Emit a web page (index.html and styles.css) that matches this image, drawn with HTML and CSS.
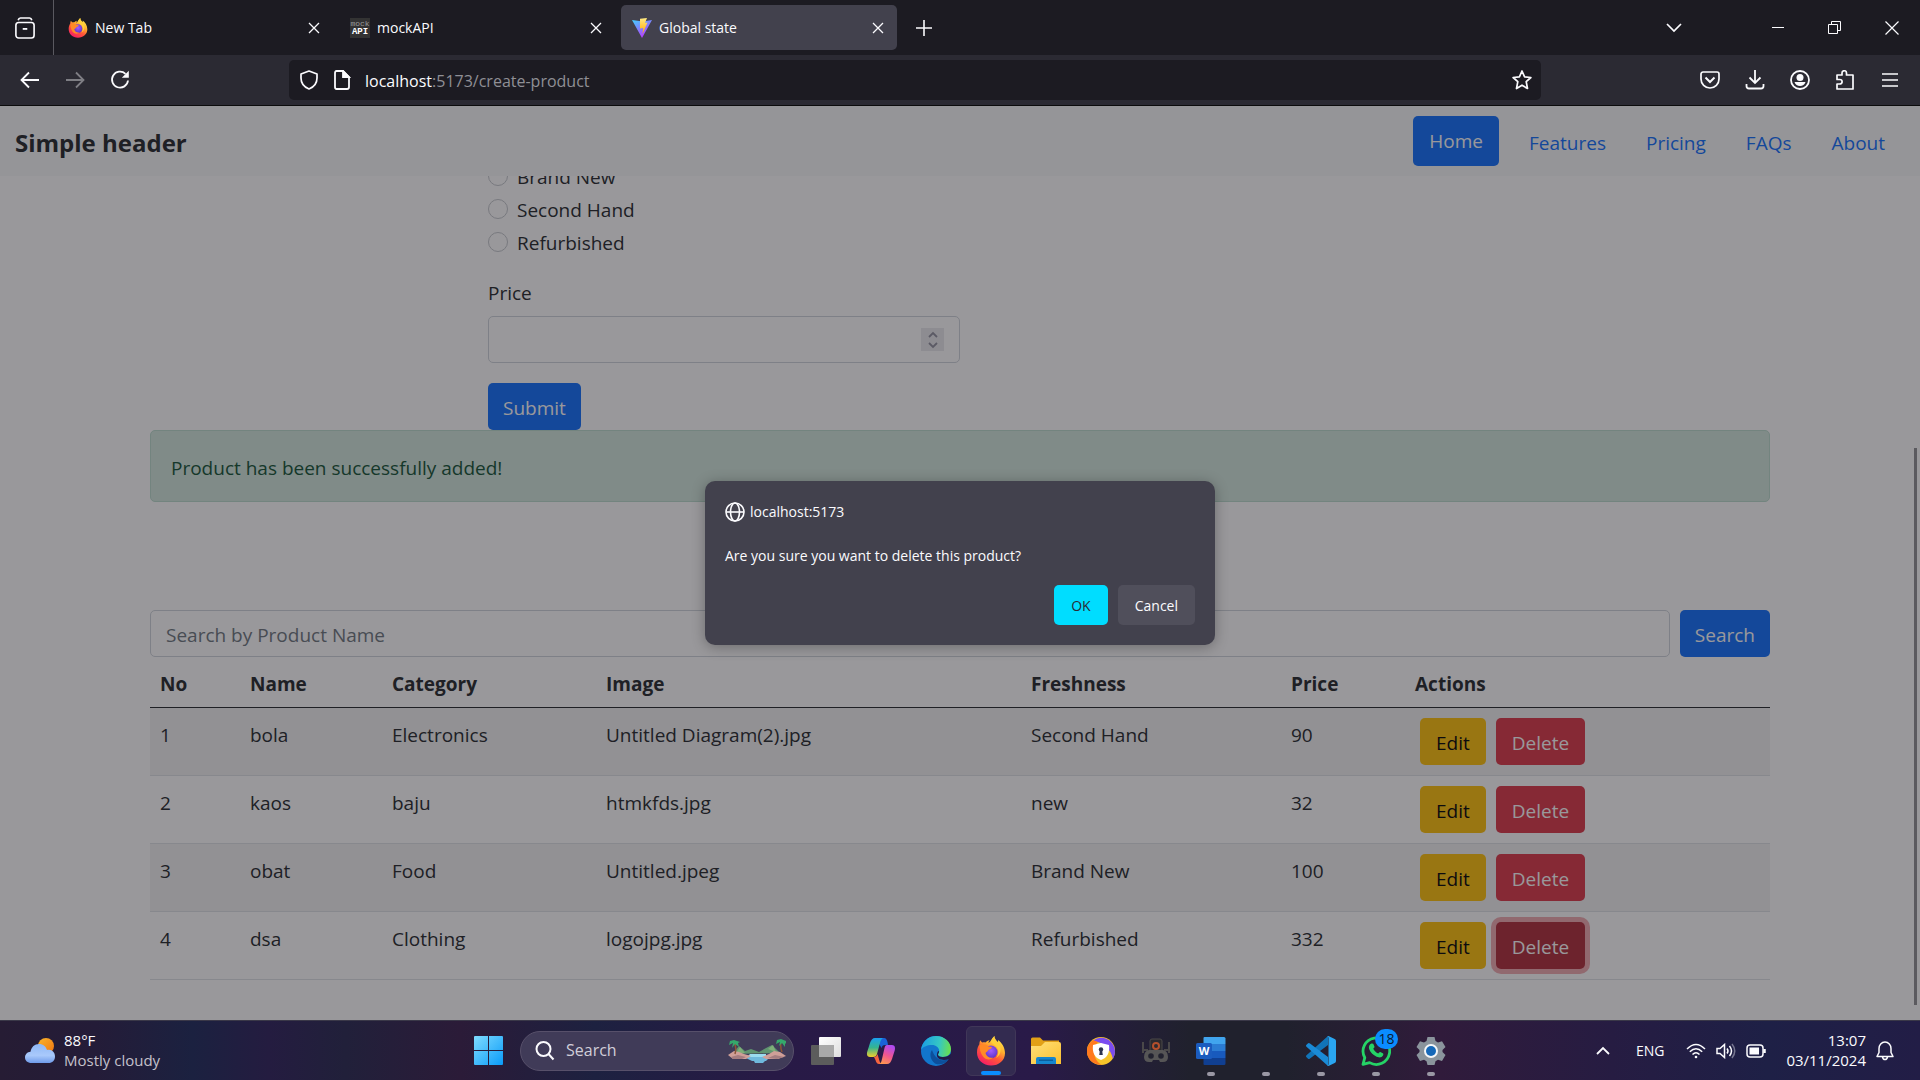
FILE: index.html
```html
<!DOCTYPE html>
<html lang="en">
<head>
<meta charset="utf-8">
<meta name="viewport" content="width=device-width, initial-scale=1">
<title>Global state</title>
<link rel="stylesheet" href="styles.css">
</head>
<body>
<svg class="defs" width="0" height="0" aria-hidden="true">
  <defs>
    <linearGradient id="fx-body" x1="0.8" y1="0" x2="0.2" y2="1"><stop offset="0" stop-color="#fff44f"/><stop offset="0.35" stop-color="#ffb02e"/><stop offset="0.6" stop-color="#ff5a36"/><stop offset="1" stop-color="#f5156c"/></linearGradient>
    <radialGradient id="fx-globe" cx="0.5" cy="0.4" r="0.6"><stop offset="0" stop-color="#a45cff"/><stop offset="1" stop-color="#5b35c8"/></radialGradient>
    <linearGradient id="vite-a" x1="0" y1="0" x2="0.6" y2="1"><stop offset="0" stop-color="#41d1ff"/><stop offset="1" stop-color="#bd34fe"/></linearGradient>
    <linearGradient id="vite-b" x1="0" y1="0" x2="0" y2="1"><stop offset="0" stop-color="#ffea83"/><stop offset="1" stop-color="#ffa800"/></linearGradient>
    <linearGradient id="cloud" x1="0" y1="0" x2="0" y2="1"><stop offset="0" stop-color="#8fb8f6"/><stop offset="0.6" stop-color="#a9c9fb"/><stop offset="1" stop-color="#6f9bea"/></linearGradient>
    <linearGradient id="sun" x1="0" y1="0" x2="1" y2="1"><stop offset="0" stop-color="#f8b52c"/><stop offset="1" stop-color="#f1740f"/></linearGradient>
    <linearGradient id="win" x1="0" y1="0" x2="1" y2="1"><stop offset="0" stop-color="#7fdcff"/><stop offset="1" stop-color="#0a9bf8"/></linearGradient>
    <linearGradient id="cop-a" x1="0" y1="0" x2="0" y2="1"><stop offset="0" stop-color="#1aa0f0"/><stop offset="0.5" stop-color="#35b58f"/><stop offset="1" stop-color="#f1cf2b"/></linearGradient>
    <linearGradient id="cop-b" x1="0.6" y1="0" x2="0.2" y2="1"><stop offset="0" stop-color="#b04af0"/><stop offset="0.5" stop-color="#f0568f"/><stop offset="1" stop-color="#ff9a4c"/></linearGradient>
    <linearGradient id="edge-a" x1="0" y1="0.4" x2="1" y2="0.5"><stop offset="0" stop-color="#1b9de2"/><stop offset="0.6" stop-color="#35c7c4"/><stop offset="1" stop-color="#6be04c"/></linearGradient>
    <linearGradient id="folder" x1="0" y1="0" x2="1" y2="1"><stop offset="0" stop-color="#ffe07a"/><stop offset="1" stop-color="#fbc02f"/></linearGradient>
    <linearGradient id="view" x1="0" y1="0" x2="1" y2="1"><stop offset="0" stop-color="#ffffff"/><stop offset="1" stop-color="#dedede"/></linearGradient>
    <symbol id="firefox" viewBox="0 0 30 30">
      <path fill="url(#fx-body)" d="M18.500 0c-.6 3 1.500 4.700 3 6.300.7-.5.700-1.600.500-2.400 3.600 2.600 7 7.300 7 13 0 7.500-6 12.600-14 12.600S1 24 1 16.500C1 12.800 2.200 10 3.400 8.300c0-1.400.2-2.900 1-4 .5 1 1 1.700 1.800 2.200 1-.3 2-.3 3.200 0 1.200-1.200 2.600-2 4.200-2.200-.8 1-1.200 1.800-1.200 2.800C14.400 6 15.700 3 18.500 0z"/>
      <circle cx="15" cy="16" r="6.500" fill="url(#fx-globe)"/>
      <path fill="#ff8a26" d="M4 9c3-1.500 6.500-.8 8.500 1.400 1.200.2 2.500.1 3.500.5-.3 1.500-2 2.200-3.500 2.800-.5 1.600-2 1.800-3 3.300 1 4 4.500 5.500 8 4.500-3 3-8 2.500-10.500-1S3 12.500 4 9z"/>
      <path fill="#ffcf3a" d="M18.500 0c-.4 3.500 3.700 5 5.500 9.500 1.800 4.700 0 10.500-4 12.500 3-3.500 3-8 .5-11-1.500-1.800-4.800-3.500-5.500-5.500.5-2 1.500-4 3.500-5.500z"/>
    </symbol>
    <symbol id="close" viewBox="0 0 12 12"><path d="M1 1l10 10M11 1L1 11" fill="none" stroke="currentColor" stroke-width="1.300"/></symbol>
  </defs>
</svg>

<div class="tabstrip">
  <button class="icon-btn firefox-view" aria-label="Firefox View">
    <svg width="20" height="22" viewBox="0 0 22 24" fill="none" stroke="currentColor" stroke-width="1.800"><path d="M3.500 3.500C4 1.500 5 1 6 1h10c1 0 2 .5 2.500 2.500"/><rect x="1" y="6" width="20" height="17" rx="3"/><path d="M8.500 13h5" stroke-width="2"/></svg>
  </button>
  <div class="tabs">
    <div class="tab">
      <svg width="20" height="20"><use href="#firefox"/></svg>
      <span class="tab-title">New Tab</span>
      <button class="icon-btn tab-close" aria-label="Close New Tab"><svg width="12" height="12"><use href="#close"/></svg></button>
    </div>
    <div class="tab">
      <span class="mock-icon"><span>mock</span><b>API</b></span>
      <span class="tab-title">mockAPI</span>
      <button class="icon-btn tab-close" aria-label="Close mockAPI"><svg width="12" height="12"><use href="#close"/></svg></button>
    </div>
    <div class="tab tab-active">
      <svg width="20" height="20" viewBox="0 0 20 20"><path fill="url(#vite-a)" d="M0 2l10 18L20 2l-9 1.500z"/><path fill="url(#vite-b)" d="M8 .7L15 0l-2 5 2.500-.4L10.500 16l.7-6-3.200.6z"/></svg>
      <span class="tab-title">Global state</span>
      <button class="icon-btn tab-close" aria-label="Close Global state"><svg width="12" height="12"><use href="#close"/></svg></button>
    </div>
  </div>
  <button class="icon-btn new-tab" aria-label="New tab"><svg width="16" height="16" viewBox="0 0 16 16" stroke="currentColor" stroke-width="1.600"><path d="M8 0v16M0 8h16"/></svg></button>
  <button class="icon-btn list-tabs" aria-label="List all tabs"><svg width="16" height="10" viewBox="0 0 16 10" fill="none" stroke="currentColor" stroke-width="1.700"><path d="M1 1l7 7 7-7"/></svg></button>
  <div class="window-controls">
    <button class="icon-btn" aria-label="Minimize"><svg width="12" height="12" viewBox="0 0 12 12" stroke="currentColor"><path d="M0 5.500h12"/></svg></button>
    <button class="icon-btn" aria-label="Restore"><svg width="13" height="13" viewBox="0 0 13 13" fill="none" stroke="currentColor"><path d="M.5 3.500h9v9h-9zM3.500 3V.5h9v9H10"/></svg></button>
    <button class="icon-btn" aria-label="Close window"><svg width="14" height="14" viewBox="0 0 14 14" stroke="currentColor" stroke-width="1.200"><path d="M.5.5l13 13M13.500.5l-13 13"/></svg></button>
  </div>
</div>

<div class="toolbar">
  <div class="nav-buttons">
    <button class="icon-btn" aria-label="Back"><svg width="20" height="20" viewBox="0 0 20 20" fill="none" stroke="currentColor" stroke-width="1.800"><path d="M19 10H2M9 2.500L1.500 10 9 17.500"/></svg></button>
    <button class="icon-btn is-dim" aria-label="Forward"><svg width="20" height="20" viewBox="0 0 20 20" fill="none" stroke="currentColor" stroke-width="1.800"><path d="M1 10h17M11 2.500l7.500 7.500-7.500 7.500"/></svg></button>
    <button class="icon-btn" aria-label="Reload"><svg width="20" height="20" viewBox="0 0 20 20" fill="none" stroke="currentColor" stroke-width="1.800"><path d="M15.500 3.800A8 8 0 1 0 18 10.500"/><path d="M18.800.8v7h-7z" fill="currentColor" stroke="none"/></svg></button>
  </div>
  <div class="urlbar">
    <svg width="20" height="20" viewBox="0 0 20 20" fill="none" stroke="currentColor" stroke-width="1.700"><path d="M10 1l8 3v4c0 5-3 9-8 11-5-2-8-6-8-11V4z" stroke-linejoin="round"/></svg>
    <svg width="20" height="20" viewBox="0 0 20 20" fill="none" stroke="currentColor" stroke-width="1.800"><path d="M4.500 1H11l6 6v10c0 1-.7 2-2 2H4.500C3.500 19 3 18.300 3 17V3c0-1.300.5-2 1.500-2z"/><path d="M11 1v6h6z" fill="currentColor"/></svg>
    <div class="url" role="textbox" tabindex="0" aria-label="Address"><span class="url-host">localhost</span>:5173/create-product</div>
    <button class="icon-btn star" aria-label="Bookmark this page"><svg width="20" height="20" viewBox="0 0 20 20" fill="none" stroke="currentColor" stroke-width="1.700" stroke-linejoin="round"><path d="M10 1l2.600 5.800 6.300.7-4.700 4.200 1.300 6.800-5.500-3.300-5.500 3.300 1.300-6.800L1.100 7.500l6.300-.7z"/></svg></button>
  </div>
  <div class="tool-buttons">
    <button class="icon-btn" aria-label="Save to Pocket"><svg width="20" height="20" viewBox="0 0 20 20" fill="none" stroke="currentColor" stroke-width="1.700"><path d="M3 2h14c1 0 2 .7 2 2v5c0 5-4 9-9 9s-9-4-9-9V4c0-1.300 1-2 2-2z"/><path d="M5.500 7.500L10 12l4.500-4.500" stroke-width="2"/></svg></button>
    <button class="icon-btn" aria-label="Downloads"><svg width="20" height="20" viewBox="0 0 20 20" fill="none" stroke="currentColor" stroke-width="1.800"><path d="M10 0v13M4.500 7.500L10 13l5.500-5.500M1.500 14v2c0 1.700 1 2.500 2.500 2.500h12c1.500 0 2.500-.8 2.500-2.500v-2"/></svg></button>
    <button class="icon-btn" aria-label="Account"><svg width="20" height="20" viewBox="0 0 20 20" fill="none" stroke="currentColor" stroke-width="1.800"><circle cx="10" cy="10" r="9"/><circle cx="10" cy="7.500" r="3.500" fill="currentColor" stroke="none"/><path d="M4.500 12h11c-.7 2.500-3 4-5.500 4s-4.800-1.500-5.500-4z" fill="currentColor" stroke="none"/></svg></button>
    <button class="icon-btn" aria-label="Extensions"><svg width="20" height="20" viewBox="0 0 20 20" fill="none" stroke="currentColor" stroke-width="1.700" stroke-linejoin="round"><path d="M2 5h5V3c0-3 4.500-3 4.500 0v2H18v14H2v-5h2.500c3.500 0 3.500-4.500 0-4.500H2z"/></svg></button>
    <button class="icon-btn" aria-label="Menu"><svg width="16" height="14" viewBox="0 0 16 14" stroke="currentColor" stroke-width="1.600"><path d="M0 1h16M0 7h16M0 13h16"/></svg></button>
  </div>
</div>

<div class="viewport">
  <header class="site-header">
    <a class="brand" href="#">Simple header</a>
    <nav class="site-nav">
      <a class="nav-link nav-link-active" href="#">Home</a>
      <a class="nav-link" href="#">Features</a>
      <a class="nav-link" href="#">Pricing</a>
      <a class="nav-link" href="#">FAQs</a>
      <a class="nav-link" href="#">About</a>
    </nav>
  </header>
  <main class="container">
    <form class="product-form">
      <div class="choices">
        <label class="choice"><input type="radio" name="freshness">Brand New</label>
        <label class="choice"><input type="radio" name="freshness">Second Hand</label>
        <label class="choice"><input type="radio" name="freshness">Refurbished</label>
      </div>
      <label class="field-label" for="price">Price</label>
      <div class="number-field">
        <input class="text-input" id="price" type="number">
        <span class="spinner"><svg width="12" height="18" viewBox="0 0 12 18" fill="none" stroke="currentColor" stroke-width="1.800"><path d="M2 6l4-4 4 4M2 12l4 4 4-4"/></svg></span>
      </div>
      <button class="btn btn-primary" type="button">Submit</button>
    </form>
    <div class="alert" role="alert">Product has been successfully added!</div>
    <div class="search-row">
      <input class="text-input" type="search" placeholder="Search by Product Name" aria-label="Search by Product Name">
      <button class="btn btn-primary" type="button">Search</button>
    </div>
    <table class="products">
      <colgroup><col class="col-no"><col class="col-name"><col class="col-category"><col class="col-image"><col class="col-freshness"><col class="col-price"><col></colgroup>
      <thead><tr><th>No</th><th>Name</th><th>Category</th><th>Image</th><th>Freshness</th><th>Price</th><th>Actions</th></tr></thead>
      <tbody>
        <tr><td>1</td><td>bola</td><td>Electronics</td><td>Untitled Diagram(2).jpg</td><td>Second Hand</td><td>90</td><td class="actions-cell"><div class="actions"><button class="btn btn-warning">Edit</button><button class="btn btn-danger">Delete</button></div></td></tr>
        <tr><td>2</td><td>kaos</td><td>baju</td><td>htmkfds.jpg</td><td>new</td><td>32</td><td class="actions-cell"><div class="actions"><button class="btn btn-warning">Edit</button><button class="btn btn-danger">Delete</button></div></td></tr>
        <tr><td>3</td><td>obat</td><td>Food</td><td>Untitled.jpeg</td><td>Brand New</td><td>100</td><td class="actions-cell"><div class="actions"><button class="btn btn-warning">Edit</button><button class="btn btn-danger">Delete</button></div></td></tr>
        <tr><td>4</td><td>dsa</td><td>Clothing</td><td>logojpg.jpg</td><td>Refurbished</td><td>332</td><td class="actions-cell"><div class="actions"><button class="btn btn-warning">Edit</button><button class="btn btn-danger btn-pressed">Delete</button></div></td></tr>
      </tbody>
    </table>
  </main>
  <div class="scroll-thumb"></div>
  <div class="backdrop">
    <div class="dialog" role="alertdialog" aria-labelledby="dialog-title" aria-describedby="dialog-text">
      <div class="dialog-title" id="dialog-title">
        <svg width="20" height="20" viewBox="0 0 20 20" fill="none" stroke="currentColor" stroke-width="1.600"><circle cx="10" cy="10" r="9"/><ellipse cx="10" cy="10" rx="4.500" ry="9"/><path d="M1 10h18"/></svg>
        localhost:5173
      </div>
      <p class="dialog-text" id="dialog-text">Are you sure you want to delete this product?</p>
      <div class="dialog-actions">
        <button class="dialog-btn dialog-btn-ok">OK</button>
        <button class="dialog-btn">Cancel</button>
      </div>
    </div>
  </div>
</div>

<footer class="taskbar">
  <button class="weather">
    <svg width="30" height="26" viewBox="0 0 30 26"><circle cx="21" cy="8" r="8" fill="url(#sun)"/><path fill="url(#cloud)" d="M6.500 25C2.500 25 0 22.500 0 19.500c0-3.200 2.300-5.500 5.500-5.800C6.500 9 9.500 6 14 6c4.300 0 6.800 2.500 8 6 4.500-1.300 8 2 8 6.500 0 4-2.600 6.500-6.500 6.500z"/></svg>
    <span class="weather-text"><span>88°F</span><span class="weather-desc">Mostly cloudy</span></span>
  </button>
  <div class="apps">
    <button class="app" aria-label="Start"><svg width="30" height="30" viewBox="0 0 30 30"><path fill="url(#win)" d="M1 0h13v14H0V1q0-1 1-1zM15 0h13q1 0 1 1v13H15zM0 15h14v14H1q-1 0-1-1zM15 15h14v13q0 1-1 1H15z"/></svg></button>
    <label class="task-search">
      <svg width="20" height="20" viewBox="0 0 20 20" fill="none" stroke="currentColor" stroke-width="2"><circle cx="8.500" cy="8" r="7"/><path d="M13.500 13l5 5.500"/></svg>
      <input type="text" placeholder="Search" aria-label="Search">
      <svg width="58" height="26" viewBox="0 0 58 26"><path fill="#5f9470" d="M4 16l7-8 6 5 6-2 8 3 7-4 6-3 8 8z"/><path fill="#7fae78" d="M12 9l5 6H8zM40 11l5-4 3 7z"/><path fill="#6fb9dc" d="M16 19h28l-5 2H20zM20 21h20l-2 2H24zM26 23h11l-2 2h-8z"/><path fill="#9adcf0" d="M22 16h16v3H19z"/><path fill="#cf9f98" d="M0 17l6-4 5 1 5 2 7 2-5 3H5zM34 19l7-3 5-3 6 1 6 4-8 3H38z"/><path fill="#a57d80" d="M3 19l7-2 8 2-4 2H5zM40 20l7-3 9 2-7 2z"/><path fill="none" stroke="#8c5536" stroke-width="1.500" d="M6 4q3 5 1 12M53 3q-1 6 1 11"/><path fill="#35a86b" d="M6 2l-4 1-1 4 4-2-1 5 3-4 4 3-1-4 2-1zM53 1l-4 1-1 4 4-2-1 4 3-3 3 4v-4l2 2-1-4z"/></svg>
    </label>
    <button class="app" aria-label="Task view"><svg width="30" height="28" viewBox="0 0 30 28"><rect y="8" width="23" height="20" rx="1" fill="#5c5c5c"/><rect x="8" width="22" height="20" rx="1" fill="url(#view)"/><path fill="#a9a9a9" d="M8 8h15v12H8z"/></svg></button>
    <button class="app" aria-label="Copilot"><svg width="30" height="28" viewBox="0 0 30 28"><path fill="#1a62d8" d="M10 1h8c2 0 3 2 3.500 4L22 8h-3c-2 0-3 1-3.500 3z"/><path fill="url(#cop-a)" d="M9 1h8c-2 1-2.500 3-3 5l-3 11c-.6 2-1.500 3-4 3H4c-3 0-3.500-3-2.700-5.500L4 6c1-3 2.500-5 5-5z"/><path fill="#f4633f" d="M8 20c2 0 2.800-1 3.500-3l2 7c.6 2 1.500 3 3.500 3h-4c-2 0-3-2-3.500-4z"/><path fill="url(#cop-b)" d="M21 8h5c3 0 3.500 3 2.700 5.500L26 22c-1 3-2.500 5-5 5h-8c2 0 2.500-3 3-5l2.500-11c.5-2 1.200-3 2.500-3z"/></svg></button>
    <button class="app" aria-label="Edge"><svg width="30" height="30" viewBox="0 0 30 30"><circle cx="15" cy="15" r="15" fill="#1276cc"/><path fill="url(#edge-a)" d="M0 14C1 6 7 0 15 0c9 0 15 6.500 15 13 0 5-3.500 8-8 8-3.500 0-5-1.300-5-2.200 0-1 1.200-1.600 1.200-4C18 11.500 15 9 11 9 6 9 1.500 11 0 14z"/><path fill="#0d4f9b" d="M11 14c-3 4-1.500 10 3 13.500 5 2 11 .5 13.500-4.500-6 3-13 1-16.500-9z"/><path fill="#221b48" d="M18 15c.5 1.500-1 2.500-1 3.800 0 1 2 2.400 5 2.200 3 0 6-1 8-3.500v4l-2 1.500c-5 2-13 1-12-5 .3-2 1-3 2-3z"/></svg></button>
    <button class="app app-active" aria-label="Firefox"><svg width="30" height="30"><use href="#firefox"/></svg></button>
    <button class="app" aria-label="File Explorer"><svg width="30" height="28" viewBox="0 0 30 28"><path fill="#e2a017" d="M0 2q0-1.500 1.500-1.500H9l3 3h16v6H0z"/><path fill="url(#folder)" d="M0 9h10l4-4h14q2 0 2 2v20H0z"/><path fill="#1686cf" d="M5 27v-5q0-2 2-2h16q2 0 2 2v5z"/><path fill="#0b5f9e" d="M8 22.500h14v1.500H8z"/></svg></button>
    <button class="app" aria-label="Secure browser"><svg width="28" height="28" viewBox="0 0 28 28"><circle cx="14" cy="14" r="14" fill="#f6c42a"/><path fill="#7a4cf0" d="M6 4C14-3 27 2 28 14c0 3-1 6-2 8C24 12 16 5 6 4z"/><path fill="#ff7a1e" d="M6 3C-2 8-2 20 5 25c3 2 7 3 10 3C7 24 4 12 11 5z"/><path fill="#fff" d="M14 6l8 2c1 8-2 13-8 15-6-2-9-7-8-15z"/><circle cx="14" cy="12.500" r="2.200" fill="#2b3350"/><path fill="#2b3350" d="M13 13h2l.8 5h-3.600z"/></svg></button>
    <button class="app" aria-label="Bot"><svg width="28" height="26" viewBox="0 0 28 26"><path fill="none" stroke="#4a4849" stroke-width="2" d="M1 4v11M27 4v11M1 12h5M27 12h-5"/><rect x="8" y="1" width="12" height="14" rx="2" fill="#2c2a2f" stroke="#4a4849"/><circle cx="14" cy="8" r="3" fill="none" stroke="#b5502c" stroke-width="2"/><path fill="#565556" d="M7 12h14q5 1 5 7 0 5-5 5h-3l-1-2h-6l-1 2H7q-5 0-5-5 0-6 5-7z"/><circle cx="9" cy="18" r="2.800" fill="#222230"/><circle cx="19" cy="18" r="2.800" fill="#222230"/></svg></button>
    <button class="app app-running" aria-label="Word"><svg width="30" height="28" viewBox="0 0 30 28"><path fill="#41a5ee" d="M8.500 0H28q1.500 0 1.500 1.500V7h-22V1q0-1 1-1z"/><path fill="#2b7cd3" d="M7.500 7h22v7h-22z"/><path fill="#185abd" d="M7.500 14h22v7h-22z"/><path fill="#103f91" d="M7.500 21h22v5.500Q29.500 28 28 28H8.500q-1 0-1-1z"/><rect y="6" width="16" height="16" rx="1.500" fill="#1b5cbe"/><text x="8" y="18" text-anchor="middle" class="word-letter">W</text></svg></button>
    <button class="app app-running" aria-label="Loading application"></button>
    <button class="app app-running" aria-label="Visual Studio Code"><svg width="30" height="30" viewBox="0 0 30 30"><path fill="#1174b8" d="M22 0v9L4 22.500q-1.200 1-2.200 0L.5 21.200q-1-1 0-2z"/><path fill="#1a8ad6" d="M22 30v-9L4 7.500q-1.200-1-2.200 0L.5 8.800q-1 1 0 2z"/><path fill="#2aa5f0" d="M21 29.500q1 .7 2 .3l5.700-2.800Q30 26.300 30 25V5q0-1.300-1.300-2L23 .2q-1-.4-2 .3 1.500-.5 1.500 1.500v26q0 2-1.500 1.500z"/></svg></button>
    <button class="app app-running" aria-label="WhatsApp"><svg width="30" height="30" viewBox="0 0 30 30"><path fill="none" stroke="#25d366" stroke-width="2.800" stroke-linejoin="round" d="M2 28.300l1.800-6.600A13.300 13.300 0 1 1 8.600 26.600z"/><path fill="#25d366" d="M10.500 7.500c1-.3 1.700 0 2 .8l1 2.500c.2.700-.8 1.500-1.200 2 1 2.200 2.700 3.800 5 4.800.6-.6 1.300-1.800 2-1.500l2.500 1.200c.8.4.6 1.500.2 2.200-.8 1.500-2.700 2.200-4.500 1.800C12.500 20 9 16 8 12.500c-.5-1.800.5-4.500 2.500-5z"/></svg><span class="badge">18</span></button>
    <button class="app app-running" aria-label="Settings"><svg width="30" height="28" viewBox="0 0 30 28"><path fill="#8a949c" d="M11.500 0h7l1 4 2.500 1.500 4-1.200L29.500 10l-3 3v2l3 3-3.500 6-4-1.300-2.500 1.500-1 3.800h-7l-1-3.800L8 22.700 4 24 .5 18l3-3v-2l-3-3L4 4.300l4 1.200L10.500 4z"/><circle cx="15" cy="14" r="7" fill="#f3f6f8"/><circle cx="15" cy="14" r="5" fill="#1568b8"/></svg></button>
  </div>
  <div class="tray">
    <button class="icon-btn" aria-label="Show hidden icons"><svg width="14" height="9" viewBox="0 0 14 9" fill="none" stroke="currentColor" stroke-width="1.800"><path d="M1 8l6-6 6 6"/></svg></button>
    <button class="icon-btn language">ENG</button>
    <button class="icon-btn status" aria-label="Network, volume, battery">
      <svg width="20" height="16" viewBox="0 0 20 16" fill="none" stroke="currentColor" stroke-width="1.500"><path d="M1 6q9-9 18 0M3.800 8.800q6.200-6 12.400 0M6.500 11.500q3.500-3.500 7 0"/><circle cx="10" cy="14" r="1.300" fill="currentColor" stroke="none"/></svg>
      <svg width="20" height="16" viewBox="0 0 20 16" fill="none" stroke="currentColor" stroke-width="1.500"><path d="M1 5.500h3L8.500 1.500v13L4 10.500H1z"/><path d="M11 5.500q2 2.500 0 5M13.500 3q4 5 0 10"/><path d="M16 1q5.500 7 0 14" opacity=".4"/></svg>
      <svg width="20" height="14" viewBox="0 0 20 14" fill="none" stroke="currentColor" stroke-width="1.500"><rect x="1" y="1" width="16" height="12" rx="3"/><path d="M3.500 3.500H13v7H3.500z" fill="currentColor" stroke="none"/><path d="M18.500 5v4" stroke-width="2.500"/></svg>
    </button>
    <button class="icon-btn clock"><span>13:07</span><span>03/11/2024</span></button>
    <button class="icon-btn" aria-label="Notifications"><svg width="18" height="20" viewBox="0 0 18 20" fill="none" stroke="currentColor" stroke-width="1.500"><path d="M1 15.500l2-4V7.500C3 4 5.500 1 9 1s6 3 6 6.500v4l2 4zM6.500 16q.5 2.500 2.500 2.500t2.500-2.500" stroke-linejoin="round"/></svg></button>
  </div>
</footer>
</body>
</html>
```
FILE: styles.css
```css
* { box-sizing: border-box; }

body {
  margin: 0;
  height: 100vh;
  display: flex;
  flex-direction: column;
  overflow: hidden;
  background: #1c1b22;
  color: #fbfbfe;
  font: 14px/20px "Open Sans", "Noto Sans", sans-serif;
}

button, input { font: inherit; color: inherit; }
button { padding: 0; border: 0; background: none; }
svg { display: block; flex: none; }
.defs { position: absolute; }

.icon-btn {
  display: flex;
  align-items: center;
  justify-content: center;
}

/* Tab strip */
.tabstrip {
  display: flex;
  align-items: center;
  height: 55px;
  flex: none;
}
.firefox-view {
  width: 54px;
  height: 55px;
  flex: none;
  padding-right: 4px;
  border-right: 1px solid #5a5960;
}
.tabs {
  display: flex;
  gap: 6px;
  margin-left: 3px;
}
.tab {
  display: flex;
  align-items: center;
  gap: 7px;
  width: 276px;
  height: 45px;
  padding: 1px 9px 0 11px;
  border-radius: 5px;
}
.tab-active { background: #42414d; }
.tab-title { flex: 1; }
.tab-close { width: 20px; height: 20px; }
.mock-icon {
  width: 20px;
  height: 20px;
  padding: 1px 0;
  background: #333;
  color: #9a9a9a;
  font: 8px/9px "Liberation Mono", monospace;
  text-align: center;
}
.mock-icon span, .mock-icon b { display: block; }
.mock-icon b { color: #fff; font-size: 9px; }
.new-tab { width: 40px; height: 40px; margin-left: 7px; }
.list-tabs { width: 40px; height: 40px; margin-left: auto; margin-right: 55px; }
.window-controls { display: flex; }
.window-controls .icon-btn { width: 57px; height: 54px; }

/* Toolbar */
.toolbar {
  display: flex;
  align-items: center;
  justify-content: space-between;
  height: 51px;
  flex: none;
  padding: 0 8px 0 7px;
  background: #2b2a33;
  border-bottom: 1px solid #0c0c0d;
}
.toolbar .icon-btn { width: 45px; height: 40px; }
.nav-buttons, .tool-buttons { display: flex; }
.is-dim { opacity: .4; }
.urlbar {
  display: flex;
  align-items: center;
  gap: 13px;
  flex: 1;
  height: 40px;
  margin: 0 146px 0 147px;
  padding-left: 10px;
  border-radius: 5px;
  background: #1c1b22;
}
.url {
  flex: 1;
  padding-top: 2px;
  color: #8f8f95;
  font-size: 16px;
  line-height: 24px;
}
.url-host { color: #fbfbfe; }
.toolbar .star { width: 38px; }

/* Web page */
.viewport {
  position: relative;
  flex: 1;
  min-height: 0;
  overflow: hidden;
  background: #fff;
  color: #212529;
  font-size: 19px;
  line-height: 30px;
}
.site-header {
  position: relative;
  z-index: 1;
  display: flex;
  justify-content: space-between;
  align-items: flex-start;
  padding: 10px 15px;
  background: #f8f9fa;
}
.brand {
  padding: 12px 0 8px;
  color: #212529;
  font-size: 24px;
  font-weight: 700;
  text-decoration: none;
}
.site-nav { display: flex; }
.nav-link {
  padding: 12px 20px 8px;
  color: #0d6efd;
  text-decoration: none;
}
.nav-link-active {
  padding: 10px 16px;
  margin-right: 10px;
  border-radius: 5px;
  background: #0d6efd;
  color: #fff;
}

.container {
  max-width: 1650px;
  margin: -14px auto 0;
  padding: 0 15px;
}
.product-form {
  max-width: 944px;
  margin: 0 auto;
}
.choices {
  display: grid;
  gap: 3px;
  margin-bottom: 20px;
}
.choice { display: flex; gap: 9px; }
.choice input {
  appearance: none;
  width: 20px;
  height: 20px;
  margin: 4px 0 0;
  border: 1px solid #c3c7cb;
  border-radius: 50%;
  background: #fff;
}
.field-label { display: block; margin-bottom: 8px; }
.number-field {
  position: relative;
  width: 50%;
  margin-bottom: 20px;
}
.text-input {
  display: block;
  width: 100%;
  height: 47px;
  padding: 9px 15px 7px;
  border: 1px solid #ced4da;
  border-radius: 5px;
  background: #fff;
  outline: 0;
}
.text-input::placeholder { color: #6c757d; opacity: 1; }
.text-input[type="number"] { appearance: textfield; }
.text-input::-webkit-inner-spin-button { appearance: none; }
.spinner {
  position: absolute;
  top: 12px;
  right: 16px;
  display: flex;
  align-items: center;
  justify-content: center;
  width: 23px;
  height: 23px;
  background: #e9e9ed;
  color: #8f8f9d;
}

.btn {
  height: 47px;
  padding: 2px 16px 0;
  border-radius: 5px;
}
.btn-primary { padding: 2px 15px 0; background: #0d6efd; color: #fff; }
.btn-warning { background: #ffc107; color: #000; }
.btn-danger { background: #dc3545; color: #fff; }
.btn-pressed {
  background: #b02a37;
  box-shadow: 0 0 0 5px rgba(225, 83, 97, .5);
}
.product-form .btn { display: block; }

.alert {
  padding: 22px 20px 18px;
  border: 1px solid #badbcc;
  border-radius: 5px;
  background: #d1e7dd;
  color: #0f5132;
}
.search-row {
  display: flex;
  gap: 10px;
  margin-top: 108px;
}
.search-row .text-input { flex: 1; }

.products {
  width: 100%;
  table-layout: fixed;
  border-collapse: collapse;
}
.col-no { width: 90px; }
.col-name { width: 142px; }
.col-category { width: 214px; }
.col-image { width: 425px; }
.col-freshness { width: 260px; }
.col-price { width: 124px; }
.products th, .products td {
  padding: 12px 10px 8px;
  text-align: left;
  vertical-align: top;
  border-bottom: 1px solid #dee2e6;
}
.products th { border-bottom-color: #212529; }
.products .actions-cell { padding: 10px; }
.products tbody tr:nth-child(odd) { background: #f2f2f2; }
.actions { display: flex; gap: 10px; padding-left: 5px; }

.scroll-thumb {
  position: absolute;
  right: 3px;
  top: 342px;
  bottom: 15px;
  width: 3px;
  background: #8f8f93;
}

/* Confirmation dialog */
.backdrop {
  position: absolute;
  inset: 0;
  z-index: 2;
  display: flex;
  align-items: center;
  justify-content: center;
  background: rgba(28, 27, 34, .45);
}
.dialog {
  width: 510px;
  padding: 20px;
  border-radius: 10px;
  background: #42414d;
  color: #fbfbfe;
  font-size: 14px;
  line-height: 24px;
  box-shadow: 0 2px 14px rgba(0, 0, 0, .3);
}
.dialog-title {
  display: flex;
  align-items: center;
  gap: 5px;
  height: 22px;
  font-size: 14px;
}
.dialog-text { margin: 21px 0 17px; }
.dialog-actions {
  display: flex;
  justify-content: flex-end;
  gap: 10px;
}
.dialog-btn {
  height: 40px;
  padding: 1px 17px 0;
  border-radius: 5px;
  background: #504f5b;
}
.dialog-btn-ok { background: #0df; color: #2b2a33; }

/* Taskbar */
.taskbar {
  display: flex;
  align-items: center;
  height: 60px;
  flex: none;
  border-top: 1px solid #3a3848;
  background: linear-gradient(90deg, #261c34 0, #241c38 5%, #1b2140 10%, #241c40 14%, #21203a 18%, #2b1b38 24%, #1d2140 31%, #281a46 40%, #291a48 54%, #20212d 62%, #20212d 67%, #301b3b 75%, #261c42 84%, #1e2046 92%, #221d46 100%);
}
.weather {
  display: flex;
  align-items: center;
  gap: 9px;
  flex: 1 1 0;
  padding-left: 25px;
  text-align: left;
  font-size: 15px;
}
.weather-text { padding-bottom: 2px; }
.weather-text span { display: block; }
.weather-text .weather-desc { color: #c4c1cb; }
.apps { display: flex; align-items: center; }
.app {
  position: relative;
  display: flex;
  align-items: center;
  justify-content: center;
  width: 55px;
  height: 50px;
}
.app-active {
  width: 50px;
  margin: 0 2px 0 3px;
  border: 1px solid #403758;
  border-radius: 6px;
  background: #332b50;
}
.app-running::after, .app-active::after {
  content: "";
  position: absolute;
  bottom: 0;
  left: calc(50% - 4px);
  width: 8px;
  height: 4px;
  border-radius: 2px;
  background: #9a98a4;
}
.app-active::after {
  left: calc(50% - 10px);
  width: 20px;
  background: #0a8cff;
}
.word-letter { font: 700 11px "Open Sans", sans-serif; fill: #fff; }
.badge {
  position: absolute;
  top: 3px;
  right: 5px;
  width: 23px;
  height: 20px;
  border-radius: 10px;
  background: #0a8cff;
  color: #0b1a30;
  font-size: 14px;
  line-height: 20px;
  text-align: center;
}
.task-search {
  display: flex;
  align-items: center;
  gap: 11px;
  width: 274px;
  height: 40px;
  margin: 0 4px;
  padding: 0 7px 0 14px;
  border: 1px solid #57506a;
  border-radius: 20px;
  background: #403b58;
}
.task-search input {
  flex: 1;
  min-width: 0;
  padding: 0 0 2px;
  border: 0;
  outline: 0;
  background: none;
  font-size: 16px;
}
.task-search input::placeholder { color: #d0ced8; opacity: 1; }
.tray {
  display: flex;
  align-items: center;
  justify-content: flex-end;
  flex: 1 1 0;
  padding-right: 26px;
}
.language { margin: 0 22px 0 26px; }
.status { gap: 10px; }
.clock {
  flex-direction: column;
  align-items: flex-end;
  margin: 0 10px 0 20px;
  padding-bottom: 2px;
  font-size: 15px;
}
```
